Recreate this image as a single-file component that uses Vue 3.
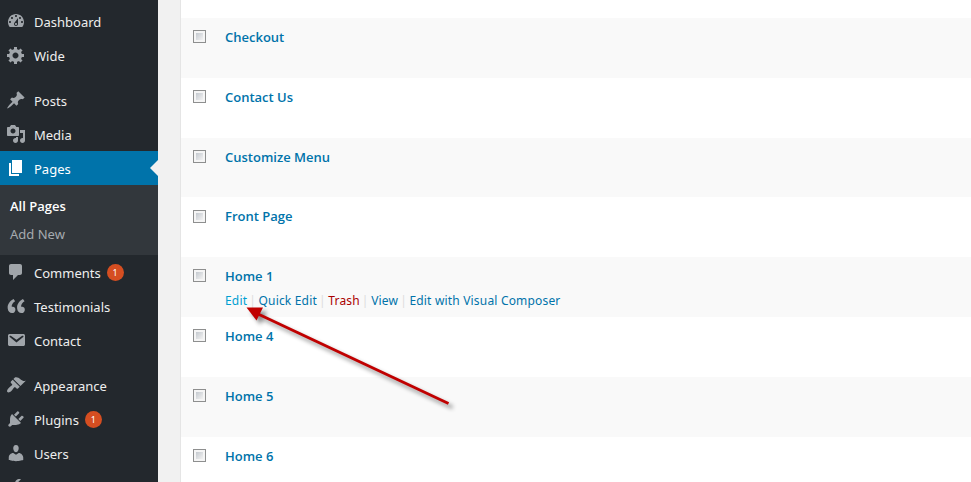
<script setup>
const icons = {
  dashboard: 'M3.76 16h12.48c1.1-1.37 1.76-3.11 1.76-5 0-4.42-3.58-8-8-8s-8 3.58-8 8c0 1.89.66 3.63 1.76 5zM10 4c.55 0 1 .45 1 1s-.45 1-1 1-1-.45-1-1 .45-1 1-1zM6 6c.55 0 1 .45 1 1s-.45 1-1 1-1-.45-1-1 .45-1 1-1zm8 0c.55 0 1 .45 1 1s-.45 1-1 1-1-.45-1-1 .45-1 1-1zm-5.37 5.55L12 7v6c0 1.1-.9 2-2 2s-2-.9-2-2c0-.57.24-1.08.63-1.45zM4 10c.55 0 1 .45 1 1s-.45 1-1 1-1-.45-1-1 .45-1 1-1zm12 0c.55 0 1 .45 1 1s-.45 1-1 1-1-.45-1-1 .45-1 1-1zm-5 3c0-.55-.45-1-1-1s-1 .45-1 1 .45 1 1 1 1-.45 1-1z',
  gear: 'M18 12h-2.18c-.17.7-.44 1.35-.81 1.93l1.54 1.54-2.1 2.1-1.54-1.54c-.58.36-1.23.63-1.91.79V19H8v-2.18c-.68-.16-1.33-.43-1.91-.79l-1.54 1.54-2.12-2.12 1.54-1.54c-.36-.58-.63-1.23-.79-1.91H1V9.03h2.17c.16-.7.44-1.35.8-1.94L2.43 5.55l2.1-2.1 1.54 1.54c.58-.37 1.24-.64 1.93-.81V2h3v2.18c.68.16 1.33.43 1.91.79l1.54-1.54 2.12 2.12-1.54 1.54c.36.59.64 1.24.8 1.94H18V12zm-8.5 1.5c1.66 0 3-1.34 3-3s-1.34-3-3-3-3 1.34-3 3 1.34 3 3 3z',
  pin: 'M10.44 3.02l1.82-1.82 6.36 6.35-1.83 1.82c-1.05-.68-2.48-.57-3.41.36l-.75.75c-.92.93-1.04 2.35-.35 3.41l-1.83 1.82-2.41-2.41-2.8 2.79c-.42.42-3.38 2.71-3.8 2.29s1.86-3.39 2.28-3.81l2.79-2.79L4.1 9.36l1.83-1.82c1.05.69 2.48.57 3.4-.36l.75-.75c.93-.92 1.05-2.35.36-3.41z',
  media: 'M13 11V4c0-.55-.45-1-1-1h-1.67L9 1H5L3.67 3H2c-.55 0-1 .45-1 1v7c0 .55.45 1 1 1h10c.55 0 1-.45 1-1zM7 4.5c1.38 0 2.5 1.12 2.5 2.5S8.38 9.5 7 9.5 4.5 8.38 4.5 7 5.62 4.5 7 4.5zM14 6h5v10.5c0 1.38-1.12 2.5-2.5 2.5S14 17.88 14 16.5s1.12-2.5 2.5-2.5c.17 0 .34.02.5.05V9h-3V6zm-4 8.05V13h2v3.5c0 1.38-1.12 2.5-2.5 2.5S7 17.88 7 16.5 8.12 14 9.5 14c.17 0 .34.02.5.05z',
  page: 'M6 15V2h10v13H6zm-1 1h8v2H3V5h2v11z',
  comment: 'M5 2h9c1.1 0 2 .9 2 2v7c0 1.1-.9 2-2 2h-2l-5 5v-5H5c-1.1 0-2-.9-2-2V4c0-1.1.9-2 2-2z',
  quote: 'M9.49 13.22c0-.74-.2-1.38-.61-1.9-.62-.78-1.83-.88-2.53-.72-.29-1.65 1.11-3.75 2.92-4.65L7.88 4c-2.73 1.3-5.42 4.28-4.96 8.05C3.21 14.43 4.59 16 6.54 16c.85 0 1.56-.25 2.12-.75s.83-1.18.83-2.03zm8.05 0c0-.74-.2-1.38-.61-1.9-.63-.78-1.83-.88-2.53-.72-.29-1.65 1.11-3.75 2.92-4.65L15.93 4c-2.73 1.3-5.41 4.28-4.95 8.05.29 2.38 1.66 3.95 3.61 3.95.85 0 1.56-.25 2.12-.75s.83-1.18.83-2.03z',
  mail: 'M3.87 4h13.25C18.37 4 19 4.59 19 5.79v8.42c0 1.19-.63 1.79-1.88 1.79H3.87c-1.25 0-1.88-.6-1.88-1.79V5.79c0-1.2.63-1.79 1.88-1.79zm6.62 8.6l6.74-5.53c.24-.2.43-.66.13-1.07-.29-.41-.82-.42-1.17-.17l-5.7 3.86L4.8 5.83c-.35-.25-.88-.24-1.17.17-.3.41-.11.87.13 1.07z',
  brush: 'M14.48 11.06L7.41 3.99l1.5-1.5c.5-.56 2.3-.47 3.51.32 1.21.8 1.43 1.28 2.91 2.1 1.18.64 2.45 1.26 4.45.85zm-.71.71L6.7 4.7 4.93 6.47c-.39.39-.39 1.02 0 1.41l1.06 1.06c.39.39.39 1.03 0 1.42-.6.6-1.43 1.11-2.21 1.69-.35.26-.7.53-1.01.84C1.43 14.23.4 16.08 1.4 17.07c.99 1 2.84-.03 4.18-1.36.31-.31.58-.66.85-1.02.57-.78 1.08-1.61 1.69-2.21.39-.39 1.02-.39 1.41 0l1.06 1.06c.39.39 1.02.39 1.41 0z',
  plug: 'M13.11 4.36L9.87 7.6 8 5.73l3.24-3.24c.35-.34 1.05-.2 1.56.32.52.51.66 1.21.31 1.55zm-8 1.77l.91-1.12 9.01 9.01-1.19.84c-.71.71-2.63 1.16-3.82 1.16H6.14L4.9 17.26c-.59.59-1.54.59-2.12 0-.59-.58-.59-1.53 0-2.12l1.24-1.24v-3.88c0-1.13.4-3.19 1.09-3.89zm7.26 3.97l3.24-3.24c.34-.35 1.04-.21 1.55.31.52.51.66 1.21.31 1.55l-3.24 3.25z',
  user: 'M10 9.25c-2.27 0-2.73-3.44-2.73-3.44C7 4.02 7.82 2 9.97 2c2.16 0 2.98 2.02 2.71 3.81 0 0-.41 3.44-2.68 3.44zm0 2.57L12.72 10c2.39 0 4.52 2.33 4.52 4.53v2.49s-3.65 1.13-7.24 1.13c-3.65 0-7.24-1.13-7.24-1.13v-2.49c0-2.25 1.94-4.48 4.47-4.48z',
  wrench: 'M16.68 9.77c-1.34 1.34-3.3 1.67-4.95.99l-5.41 6.52c-.99.99-2.59.99-3.58 0s-.99-2.59 0-3.57l6.52-5.42c-.68-1.65-.35-3.61.99-4.95 1.28-1.28 3.12-1.62 4.72-1.06l-2.89 2.89 2.82 2.82 2.86-2.87c.53 1.58.18 3.39-1.08 4.65zM3.81 16.21c.4.39 1.04.39 1.43 0 .4-.4.4-1.04 0-1.43-.39-.4-1.03-.4-1.43 0-.39.39-.39 1.03 0 1.43z',
}

const menu = [
  { label: 'Dashboard', icon: 'dashboard' },
  { label: 'Wide', icon: 'gear' },
  { label: 'Posts', icon: 'pin', spaced: true },
  { label: 'Media', icon: 'media' },
  { label: 'Pages', icon: 'page', current: true, children: ['All Pages', 'Add New'] },
  { label: 'Comments', icon: 'comment', count: 1 },
  { label: 'Testimonials', icon: 'quote' },
  { label: 'Contact', icon: 'mail' },
  { label: 'Appearance', icon: 'brush', spaced: true },
  { label: 'Plugins', icon: 'plug', count: 1 },
  { label: 'Users', icon: 'user' },
  { label: '', icon: 'wrench' },
]

const pages = [
  { title: 'Checkout' },
  { title: 'Contact Us' },
  { title: 'Customize Menu', short: true },
  { title: 'Front Page' },
  { title: 'Home 1', active: true },
  { title: 'Home 4' },
  { title: 'Home 5' },
  { title: 'Home 6' },
]

const actions = [
  { label: 'Edit', kind: 'hover' },
  { label: 'Quick Edit' },
  { label: 'Trash', kind: 'danger' },
  { label: 'View' },
  { label: 'Edit with Visual Composer' },
]
</script>

<template>
  <div class="screen">
    <nav class="sidebar">
      <template v-for="item in menu" :key="item.icon">
        <a class="item" :class="{ current: item.current, spaced: item.spaced }">
          <svg class="icon" :class="item.icon" viewBox="0 0 20 20"><path :d="icons[item.icon]" /></svg>
          <span class="label">{{ item.label }}</span>
          <span v-if="item.count" class="count">{{ item.count }}</span>
        </a>
        <div v-if="item.children" class="submenu">
          <a v-for="(child, i) in item.children" :key="child" :class="{ chosen: i === 0 }">{{ child }}</a>
        </div>
      </template>
    </nav>

    <main class="list">
      <div v-for="page in pages" :key="page.title" class="row" :class="{ short: page.short }">
        <span class="check"></span>
        <div class="cell">
          <a class="title">{{ page.title }}</a>
          <div v-if="page.active" class="actions">
            <a v-for="a in actions" :key="a.label" :class="a.kind">{{ a.label }}</a>
          </div>
        </div>
      </div>
    </main>

    <svg class="arrow" viewBox="0 0 230 125">
      <g class="stroke">
        <path d="M17 13.5L208.500 103.500" />
        <polygon points="6.500,7.500 23,7.500 16.500,20.500" />
      </g>
    </svg>
  </div>
</template>

<style>
body {
  background: #f1f1f1;
}
</style>

<style scoped>
.screen {
  position: relative;
  display: flex;
  gap: 22px;
  height: 482px;
  overflow: hidden;
  background: #f1f1f1;
  font-family: "Noto Sans", "Open Sans", sans-serif;
  font-size: 13px;
}
.sidebar {
  flex: none;
  width: 158px;
  padding-top: 4px;
  box-sizing: border-box;
  background: #23282d;
  color: #eee;
}
.item {
  position: relative;
  display: flex;
  height: 34px;
  padding-left: 6px;
  line-height: 36px;
}
.item.spaced {
  margin-top: 11px;
}
.item.current {
  background: #0073aa;
  color: #fff;
}
.item.current::after {
  content: "";
  position: absolute;
  right: 0;
  top: 9px;
  border: 8px solid transparent;
  border-left-width: 0;
  border-right-color: #f1f1f1;
}
.icon {
  flex: none;
  width: 20px;
  height: 20px;
  margin: 7px 8px 0 0;
  fill: #a0a5aa;
}
.icon.quote {
  transform: scale(1.17);
}
.current .icon {
  fill: #fff;
}
.count {
  width: 17px;
  height: 17px;
  margin: 9px 0 0 6px;
  border-radius: 50%;
  background: #d54e21;
  color: #fff;
  font-size: 9px;
  line-height: 17px;
  text-align: center;
}
.submenu {
  display: flex;
  flex-direction: column;
  height: 70px;
  padding: 7px 10px 0;
  box-sizing: border-box;
  background: #32373c;
  color: #a5aaaf;
  line-height: 28px;
}
.submenu .chosen {
  color: #fff;
  font-family: "Open Sans", sans-serif;
  font-weight: 600;
}
.list {
  flex: 1;
  padding-top: 18px;
  border-left: 1px solid #e5e5e5;
  background: #fff;
}
.row {
  display: flex;
  height: 60px;
  padding-left: 12px;
}
.row.short {
  height: 59px;
}
.row:nth-child(odd) {
  background: #f9f9f9;
}
.check {
  flex: none;
  width: 13px;
  height: 13px;
  margin: 12px 19px 0 0;
  box-sizing: border-box;
  border: 1px solid #8e8f8f;
  background: linear-gradient(135deg, #c4c9cf, #f2f2f2) content-box, #f5f5f5;
  padding: 2px;
}
.row:nth-child(4) .check {
  margin-top: 13px;
}
.cell {
  padding-top: 9px;
  line-height: 20px;
  color: #0073aa;
}
.title {
  display: block;
  font-family: "Open Sans", sans-serif;
  font-weight: 600;
}
.actions {
  display: flex;
  margin-top: 5px;
  font-size: 12px;
  letter-spacing: 0.18px;
}
.actions a + a::before {
  content: "|";
  margin: 0 2.5px 0 2px;
  color: #ddd;
}
.actions .hover {
  color: #00a0d2;
}
.actions .danger {
  color: #a00;
}
.arrow {
  position: absolute;
  left: 240px;
  top: 300px;
  width: 230px;
  height: 125px;
}
.stroke {
  fill: #c00000;
  stroke: #c00000;
  stroke-width: 3;
  filter: drop-shadow(4px 4px 2px rgba(0, 0, 0, 0.45));
}
.stroke polygon {
  stroke: none;
}
</style>
